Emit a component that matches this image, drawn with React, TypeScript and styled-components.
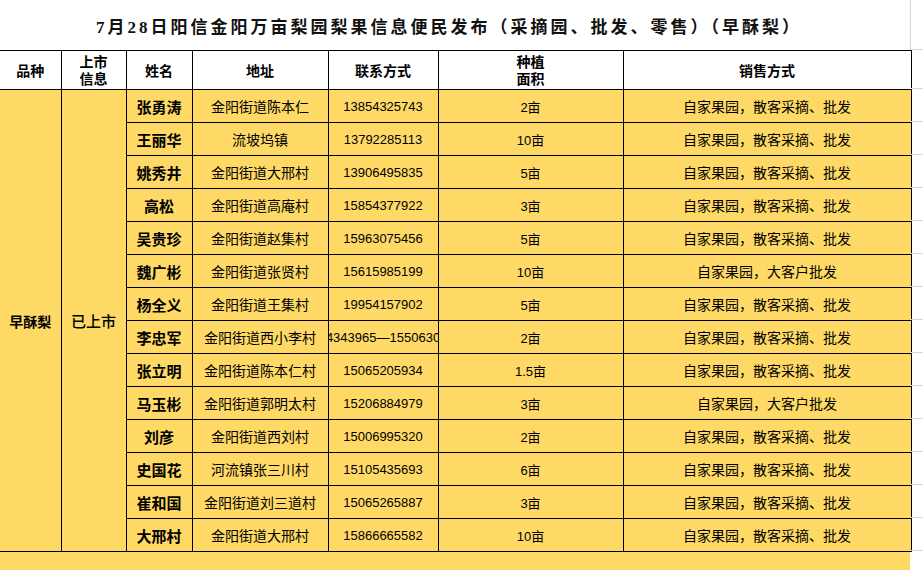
import React from 'react';
import styled, { createGlobalStyle } from 'styled-components';

const GlobalStyle = createGlobalStyle`
  html, body {
    margin: 0;
    padding: 0;
    background: #fff;
  }
  body {
    font-family: "Liberation Sans", "Noto Sans CJK SC", sans-serif;
    color: #000;
  }
`;

interface Grower {
  name: string;
  address: string;
  phone: string;
  area: string;
  sales: string;
}

const RETAIL = '自家果园，散客采摘、批发';
const BULK = '自家果园，大客户批发';

const growers: Grower[] = [
  { name: '张勇涛', address: '金阳街道陈本仁', phone: '13854325743', area: '2亩', sales: RETAIL },
  { name: '王丽华', address: '流坡坞镇', phone: '13792285113', area: '10亩', sales: RETAIL },
  { name: '姚秀井', address: '金阳街道大邢村', phone: '13906495835', area: '5亩', sales: RETAIL },
  { name: '高松', address: '金阳街道高庵村', phone: '15854377922', area: '3亩', sales: RETAIL },
  { name: '吴贵珍', address: '金阳街道赵集村', phone: '15963075456', area: '5亩', sales: RETAIL },
  { name: '魏广彬', address: '金阳街道张贤村', phone: '15615985199', area: '10亩', sales: BULK },
  { name: '杨全义', address: '金阳街道王集村', phone: '19954157902', area: '5亩', sales: RETAIL },
  { name: '李忠军', address: '金阳街道西小李村', phone: '04343965—15506305', area: '2亩', sales: RETAIL },
  { name: '张立明', address: '金阳街道陈本仁村', phone: '15065205934', area: '1.5亩', sales: RETAIL },
  { name: '马玉彬', address: '金阳街道郭明太村', phone: '15206884979', area: '3亩', sales: BULK },
  { name: '刘彦', address: '金阳街道西刘村', phone: '15006995320', area: '2亩', sales: RETAIL },
  { name: '史国花', address: '河流镇张三川村', phone: '15105435693', area: '6亩', sales: RETAIL },
  { name: '崔和国', address: '金阳街道刘三道村', phone: '15065265887', area: '3亩', sales: RETAIL },
  { name: '大邢村', address: '金阳街道大邢村', phone: '15866665582', area: '10亩', sales: RETAIL },
];

const colWidths = [61, 65, 66, 136, 110, 185, 288];

const YELLOW = '#ffd966';
const GRID = '#d6d6d6';

const Sheet = styled.div`
  display: flex;
  width: 923px;
  height: 570px;
  overflow: hidden;
`;

const Main = styled.div`
  width: 911px;
  flex-shrink: 0;
  display: flex;
  flex-direction: column;
`;

const Title = styled.div`
  height: 50px;
  box-sizing: border-box;
  border-right: 1px solid ${GRID};
  display: flex;
  align-items: center;
  justify-content: center;
  padding-right: 12px;
  font-family: "Liberation Serif", "Noto Sans CJK SC", serif;
  font-size: 17px;
  font-weight: bold;
  letter-spacing: 3px;
  color: #111;
`;

const Table = styled.table`
  width: 911px;
  table-layout: fixed;
  border-collapse: collapse;
`;

const HeadCell = styled.th`
  height: 38px;
  padding: 0;
  border: 1px solid #000;
  background: #fff;
  font-family: "Noto Sans CJK SC", sans-serif;
  font-size: 14px;
  font-weight: bold;
  line-height: 17px;
  text-align: center;
  vertical-align: middle;

  &:first-child {
    border-left: none;
  }
`;

type Variant = 'name' | 'text' | 'number' | 'merged' | 'status';

const Cell = styled.td<{ $variant: Variant }>`
  height: 32px;
  padding: 0;
  border: 1px solid #000;
  background: ${YELLOW};
  text-align: center;
  vertical-align: middle;
  white-space: nowrap;
  overflow: hidden;
  font-family: ${({ $variant }) =>
    $variant === 'number'
      ? '"Liberation Sans", "Noto Sans CJK SC", sans-serif'
      : '"Noto Sans CJK SC", sans-serif'};
  font-size: ${({ $variant }) =>
    $variant === 'number' ? '13px' : $variant === 'name' || $variant === 'status' ? '15px' : '14px'};
  font-weight: ${({ $variant }) =>
    $variant === 'name' || $variant === 'merged' ? 'bold' : $variant === 'status' ? 500 : 'normal'};

  &:first-child {
    border-left: none;
  }
`;

const Clip = styled.div`
  display: flex;
  justify-content: center;
  overflow: hidden;
  white-space: nowrap;
`;

const Tail = styled.div`
  flex: 1;
  width: 910px;
  background: ${YELLOW};
`;

const Gutter = styled.div`
  flex: 1;
  display: flex;
  flex-direction: column;
`;

const GutterCell = styled.div<{ $h: number }>`
  height: ${({ $h }) => $h}px;
  box-sizing: border-box;
  border-bottom: 1px solid ${GRID};
  flex-shrink: 0;
`;

function App() {
  const gutterHeights = [50, 39, ...growers.map(() => 33)];

  return (
    <>
      <GlobalStyle />
      <Sheet>
        <Main>
          <Title>7月28日阳信金阳万亩梨园梨果信息便民发布（采摘园、批发、零售）（早酥梨）</Title>
          <Table>
            <colgroup>
              {colWidths.map((w, i) => (
                <col key={i} style={{ width: w }} />
              ))}
            </colgroup>
            <thead>
              <tr>
                <HeadCell>品种</HeadCell>
                <HeadCell>
                  上市
                  <br />
                  信息
                </HeadCell>
                <HeadCell>姓名</HeadCell>
                <HeadCell>地址</HeadCell>
                <HeadCell>联系方式</HeadCell>
                <HeadCell>
                  种植
                  <br />
                  面积
                </HeadCell>
                <HeadCell>销售方式</HeadCell>
              </tr>
            </thead>
            <tbody>
              {growers.map((g, i) => (
                <tr key={g.name + i}>
                  {i === 0 && (
                    <>
                      <Cell $variant="merged" rowSpan={growers.length}>
                        早酥梨
                      </Cell>
                      <Cell $variant="status" rowSpan={growers.length}>
                        已上市
                      </Cell>
                    </>
                  )}
                  <Cell $variant="name">{g.name}</Cell>
                  <Cell $variant="text">{g.address}</Cell>
                  <Cell $variant="number">
                    <Clip>{g.phone}</Clip>
                  </Cell>
                  <Cell $variant="number">{g.area}</Cell>
                  <Cell $variant="text">{g.sales}</Cell>
                </tr>
              ))}
            </tbody>
          </Table>
          <Tail />
        </Main>
        <Gutter>
          {gutterHeights.map((h, i) => (
            <GutterCell key={i} $h={h} />
          ))}
        </Gutter>
      </Sheet>
    </>
  );
}

export default App;
